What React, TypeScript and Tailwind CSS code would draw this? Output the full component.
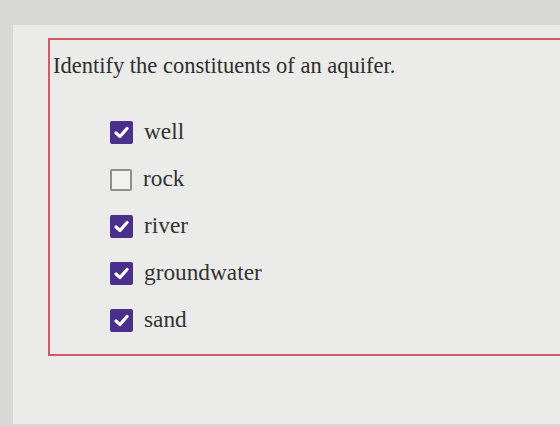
import React from "react";

const items = [
  { label: "well", checked: true },
  { label: "rock", checked: false },
  { label: "river", checked: true },
  { label: "groundwater", checked: true },
  { label: "sand", checked: true },
];

function Box({ checked }: { checked: boolean }) {
  if (!checked) {
    return <div className="w-[22px] h-[22px] rounded-[2px] border-2 border-[#8e8e8e] bg-[#f1f1ef]" />;
  }
  return (
    <div className="w-[23px] h-[23px] rounded-[2px] bg-[#4a2f8c] flex items-center justify-center">
      <svg width="15" height="13" viewBox="0 0 15 13">
        <path d="M2 7 L6 10.5 L13 2.5" fill="none" stroke="#ffffff" strokeWidth="3.2" strokeLinecap="round" strokeLinejoin="round" />
      </svg>
    </div>
  );
}

export default function App() {
  return (
    <div className="w-[560px] h-[426px] bg-[#d8d8d6] pt-[25px] pl-[13px] overflow-hidden" style={{ fontFamily: '"Liberation Serif", serif' }}>
      <div className="h-[399px] bg-[#ebebe9] pt-[13px] pl-[35px]">
        <div className="h-[318px] border-l-2 border-t-2 border-b-2 border-[#cf5a66] pl-[3px] pt-[12px]">
          <div className="text-[22.5px] leading-[28px] text-[#2e2e2e]">Identify the constituents of an aquifer.</div>
          <div className="flex flex-col gap-[24px] mt-[41px] pl-[57px]">
            {items.map((it) => (
              <div key={it.label} className="flex items-center gap-[11px] h-[23px]">
                <Box checked={it.checked} />
                <span className="text-[23.3px] leading-[23px] text-[#333333] -mt-[2px]">{it.label}</span>
              </div>
            ))}
          </div>
        </div>
      </div>
    </div>
  );
}
